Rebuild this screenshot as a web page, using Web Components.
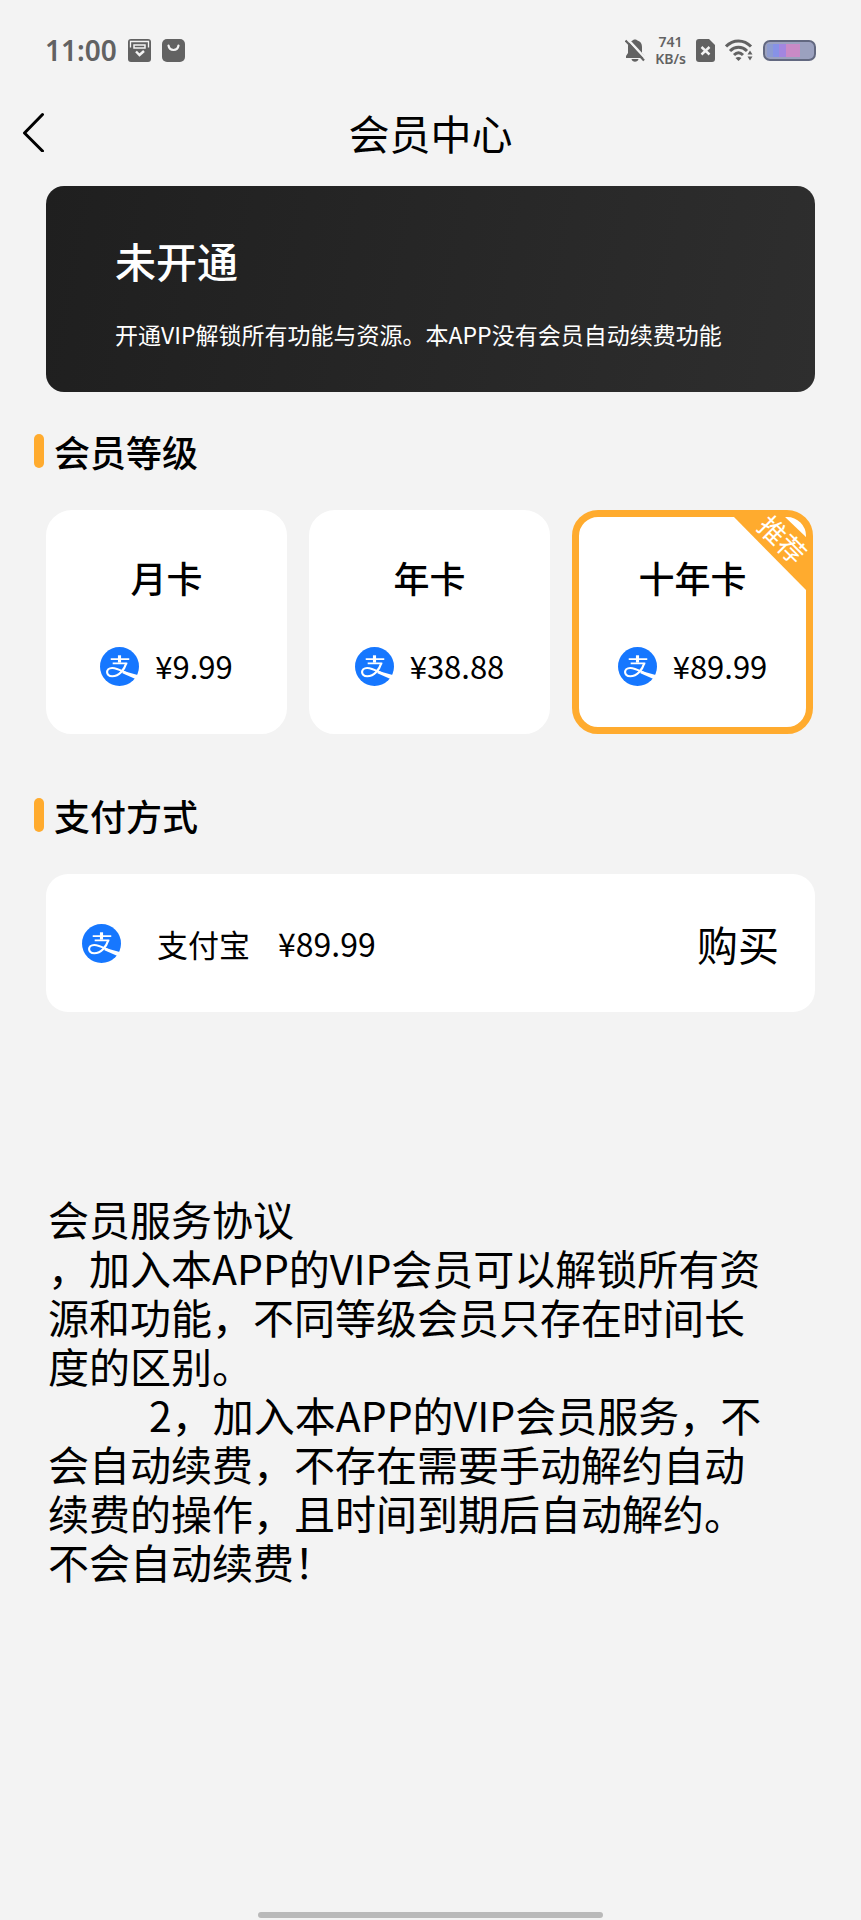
<!DOCTYPE html>
<html lang="zh-CN">
<head>
<meta charset="UTF-8">
<meta name="viewport" content="width=device-width, initial-scale=1">
<title>会员中心</title>
<style>
    body {
        margin: 0;
        background: #f3f3f3;
        color: #000;
        font-family: "Noto Sans CJK SC", sans-serif;
    }
</style>
</head>
<body>
<vip-page>
    <status-bar slot="top" time="11:00" speed="741"></status-bar>
    <nav-header slot="top">会员中心</nav-header>

    <vip-banner>
        <span slot="title">未开通</span>
        开通VIP解锁所有功能与资源。本APP没有会员自动续费功能
    </vip-banner>

    <section-title>会员等级</section-title>
    <plan-list></plan-list>

    <section-title class="pay">支付方式</section-title>
    <pay-row price="¥89.99">支付宝</pay-row>

    <service-terms></service-terms>
</vip-page>

<script>
class VipPage extends HTMLElement {
    constructor() {
        super();
        this.attachShadow({ mode: 'open' });
        this.shadowRoot.innerHTML = `
        <style>
            :host {
                display: flex;
                flex-direction: column;
                min-height: 100vh;
            }

            main {
                display: flex;
                flex-direction: column;
                padding: 22px 46px 0;
            }

            .home-bar {
                width: 40%;
                height: 6px;
                margin: auto auto 2px;
                border-radius: 3px;
                background: #b9b9b9;
            }

            ::slotted(section-title) {
                margin: 39px 0 39px -12px;
            }

            ::slotted(section-title.pay) {
                margin-top: 61px;
            }

            ::slotted(service-terms) {
                margin-top: 182px;
            }
        </style>
        <slot name="top"></slot>
        <main><slot></slot></main>
        <div class="home-bar"></div>
        `;
    }
}

class StatusBar extends HTMLElement {
    constructor() {
        super();
        this.attachShadow({ mode: 'open' });
        this.shadowRoot.innerHTML = `
        <style>
            :host {
                display: flex;
                justify-content: space-between;
                align-items: center;
                height: 100px;
                padding: 0 45px;
                color: #626262;
                font-family: "Noto Sans", sans-serif;
                font-weight: 600;
            }

            div {
                display: flex;
                align-items: center;
            }

            .left {
                gap: 11px;
            }

            .right {
                gap: 10px;
            }

            time {
                font-size: 28px;
                line-height: 32px;
            }

            .speed {
                flex-direction: column;
                font-size: 14px;
                line-height: 17px;
            }

            svg {
                display: block;
            }
        </style>
        <div class="left">
            <time>${this.getAttribute('time')}</time>
            <svg width="23" height="23" viewBox="0 0 23 23" aria-hidden="true">
                <rect width="23" height="23" rx="3" fill="#626262"/>
                <path d="M2.500 8.500V2.500h18v6" fill="none" stroke="#f3f3f3" stroke-width="1.300"/>
                <path d="M6 9V6h11v3z" fill="none" stroke="#f3f3f3" stroke-width="1.500"/>
                <path d="M8 12.500l3.500 3.500L16 12" fill="none" stroke="#f3f3f3" stroke-width="2.400"/>
            </svg>
            <svg width="23" height="23" viewBox="0 0 23 23" aria-hidden="true">
                <rect width="23" height="23" rx="5" fill="#626262"/>
                <path d="M6.500 6.500c1 6 9 6 10 0" fill="none" stroke="#f3f3f3" stroke-width="2.200" stroke-linecap="round"/>
            </svg>
        </div>
        <div class="right">
            <svg width="20" height="23" viewBox="0 0 20 23" aria-hidden="true">
                <path d="M1 19v-2l2-3V8c0-4 2-5.500 4.500-6.500 1-1.500 4-1.500 5 0C15.500 2.500 17 4.500 17 8v6l2.500 3v2zM6.500 20h7c-.5 3.500-6.500 3.500-7 0z" fill="#626262"/>
                <path d="M2 -.5l18.500 20" stroke="#f3f3f3" stroke-width="2.500"/>
                <path d="M.5 1.500l18.500 20" stroke="#626262" stroke-width="2.200"/>
            </svg>
            <div class="speed"><span>${this.getAttribute('speed')}</span><span>KB/s</span></div>
            <svg width="19" height="23" viewBox="0 0 19 23" aria-hidden="true">
                <path d="M3 0h10l6 6v14q0 3-3 3H3q-3 0-3-3V3q0-3 3-3z" fill="#626262"/>
                <path d="M5.500 8l8 7.500M13.500 8l-8 7.500" stroke="#f3f3f3" stroke-width="2.400"/>
            </svg>
            <svg width="28" height="22" viewBox="0 0 28 22" aria-hidden="true">
                <g fill="none" stroke="#626262" stroke-width="3">
                    <path d="M1 7.500c7-7.500 18-7.500 25 0"/>
                    <path d="M5 12c5-5 12-5 17 0"/>
                    <path d="M9 16c3-3 6-3 9 0"/>
                </g>
                <path d="M10.500 19q3-2 6 0l-3 3zM22.500 15.500L25 11.500l2.500 4zM22.500 17.500h5L25 21.500z" fill="#626262"/>
            </svg>
            <svg width="53" height="21" viewBox="0 0 53 21" aria-hidden="true">
                <rect x="1" y="1" width="51" height="19" rx="6" fill="#9ba1bf" stroke="#626880" stroke-width="2"/>
                <path d="M4 4h7v13H4z" fill="#8d9bd0"/>
                <path d="M10 4h6v13h-6z" fill="#8792e6"/>
                <path d="M16 4h7v13h-7z" fill="#a286e0"/>
                <path d="M23 4h14v13H23z" fill="#c98ac6"/>
            </svg>
        </div>
        `;
    }
}

class NavHeader extends HTMLElement {
    constructor() {
        super();
        this.attachShadow({ mode: 'open' });
        this.shadowRoot.innerHTML = `
        <style>
            :host {
                display: grid;
                grid-template-columns: 48px 1fr 48px;
                align-items: center;
                height: 64px;
                padding: 0 10px;
            }

            button {
                display: flex;
                padding: 12px;
                border: 0;
                background: none;
                cursor: pointer;
            }

            h1 {
                margin: 0;
                font-size: 41px;
                line-height: 49px;
                font-weight: 400;
                text-align: center;
            }
        </style>
        <button type="button" aria-label="返回">
            <svg width="24" height="40" viewBox="0 0 24 40" fill="none" stroke="#000" stroke-width="3" stroke-linecap="round" stroke-linejoin="round" aria-hidden="true">
                <path d="M20.500 2.500L2.500 21L20.500 39"/>
            </svg>
        </button>
        <h1><slot></slot></h1>
        `;
    }
}

class VipBanner extends HTMLElement {
    constructor() {
        super();
        this.attachShadow({ mode: 'open' });
        this.shadowRoot.innerHTML = `
        <style>
            :host {
                display: flex;
                flex-direction: column;
                gap: 32px;
                padding: 50px 69px 41px;
                border-radius: 18px;
                background: linear-gradient(100deg, #1f1f1f, #2e2e2e);
                color: #fff;
            }

            h2, p {
                margin: 0;
            }

            h2 {
                font-size: 41px;
                line-height: 49px;
                font-weight: 500;
            }

            p {
                font-size: 23px;
                line-height: 34px;
            }
        </style>
        <h2><slot name="title"></slot></h2>
        <p><slot></slot></p>
        `;
    }
}

class SectionTitle extends HTMLElement {
    constructor() {
        super();
        this.attachShadow({ mode: 'open' });
        this.shadowRoot.innerHTML = `
        <style>
            :host {
                display: flex;
                align-items: center;
                gap: 10px;
                height: 40px;
            }

            i {
                width: 10px;
                height: 34px;
                border-radius: 5px;
                background: #ffab2e;
            }

            h2 {
                margin: 0;
                font-size: 36px;
                line-height: 40px;
                font-weight: 500;
            }
        </style>
        <i></i>
        <h2><slot></slot></h2>
        `;
    }
}

class AlipayIcon extends HTMLElement {
    constructor() {
        super();
        this.attachShadow({ mode: 'open' });
        this.shadowRoot.innerHTML = `
        <style>
            :host {
                display: block;
                flex: none;
            }

            svg {
                display: block;
            }
        </style>
        <svg width="39" height="39" viewBox="0 0 40 40" aria-hidden="true">
            <circle cx="20" cy="20" r="20" fill="#1677ff"/>
            <g fill="none" stroke="#fff">
                <path d="M20 8.500V16" stroke-width="3.200"/>
                <path d="M11 12.500H30M13 16.800H28" stroke-width="1.800"/>
                <path d="M27 16.500C25 23 20 30 12.500 30C5.500 30 5.500 21.500 12.500 21.500C18 21.500 23 25 28 27.200" stroke-width="2.200"/>
            </g>
            <path d="M24 24.500L39.500 29L37 33L23 26.800z" fill="#fff"/>
        </svg>
        `;
    }
}

class PlanCard extends HTMLElement {
    constructor() {
        super();
        this.attachShadow({ mode: 'open' });
    }

    connectedCallback() {
        const selected = this.hasAttribute('selected');
        this.shadowRoot.innerHTML = `
        <style>
            :host {
                display: block;
            }

            label {
                position: relative;
                display: flex;
                flex-direction: column;
                align-items: center;
                gap: 45px;
                box-sizing: border-box;
                height: 224px;
                padding-top: 38px;
                border: 7px solid #fff;
                border-radius: 26px;
                background: #fff;
                cursor: pointer;
            }

            label:has(input:checked) {
                border-color: #ffab2e;
            }

            input {
                position: absolute;
                opacity: 0;
            }

            .name {
                font-size: 36px;
                line-height: 44px;
                font-weight: 500;
            }

            .price {
                display: flex;
                align-items: center;
                gap: 16px;
                font-size: 31px;
                line-height: 44px;
            }

            .ribbon {
                position: absolute;
                top: 0;
                right: 0;
                overflow: visible;
            }
        </style>
        <label>
            <input type="radio" name="plan" ${selected ? 'checked' : ''}>
            <span class="name"><slot></slot></span>
            <span class="price"><alipay-icon></alipay-icon>${this.getAttribute('price')}</span>
            ${this.hasAttribute('badge') ? `
            <svg class="ribbon" width="84" height="84" viewBox="0 0 84 84">
                <path d="M11 -1H62L85 21V74z" fill="#ffab2e"/>
                <text x="60" y="33" transform="rotate(45 60 23)" text-anchor="middle" font-size="27" fill="#fff">${this.getAttribute('badge')}</text>
            </svg>` : ''}
        </label>
        `;
    }
}

class PlanList extends HTMLElement {
    constructor() {
        super();
        this.attachShadow({ mode: 'open' });
        this.shadowRoot.innerHTML = `
        <style>
            :host {
                display: grid;
                grid-template-columns: repeat(3, 1fr);
                gap: 22px;
                padding-right: 2px;
            }
        </style>
        <plan-card price="¥9.99">月卡</plan-card>
        <plan-card price="¥38.88">年卡</plan-card>
        <plan-card price="¥89.99" badge="推荐" selected>十年卡</plan-card>
        `;
    }
}

class PayRow extends HTMLElement {
    constructor() {
        super();
        this.attachShadow({ mode: 'open' });
        this.shadowRoot.innerHTML = `
        <style>
            :host {
                display: flex;
                align-items: center;
                height: 138px;
                padding: 0 36px;
                border-radius: 22px;
                background: #fff;
                font-size: 31px;
            }

            .name {
                margin: 0 28px 0 36px;
            }

            .price {
                font-size: 32px;
            }

            button {
                margin-left: auto;
                padding: 0;
                border: 0;
                background: none;
                color: inherit;
                font: inherit;
                font-size: 41px;
                cursor: pointer;
            }
        </style>
        <alipay-icon></alipay-icon>
        <span class="name"><slot></slot></span>
        <span class="price">${this.getAttribute('price')}</span>
        <button type="button">购买</button>
        `;
    }
}

class ServiceTerms extends HTMLElement {
    constructor() {
        super();
        this.attachShadow({ mode: 'open' });
        this.shadowRoot.innerHTML = `
        <style>
            :host {
                display: block;
                padding: 0 40px 0 2px;
                font-size: 41px;
                line-height: 49px;
            }

            p {
                margin: 0;
                white-space: pre-wrap;
                text-spacing-trim: space-all;
            }
        </style>
        <p>会员服务协议
，加入本APP的VIP会员可以解锁所有资源和功能，不同等级会员只存在时间长度的区别。
           2，加入本APP的VIP会员服务，不会自动续费，不存在需要手动解约自动续费的操作，且时间到期后自动解约。不会自动续费！</p>
        `;
    }
}

// Register the custom elements
customElements.define('alipay-icon', AlipayIcon);
customElements.define('vip-page', VipPage);
customElements.define('status-bar', StatusBar);
customElements.define('nav-header', NavHeader);
customElements.define('vip-banner', VipBanner);
customElements.define('section-title', SectionTitle);
customElements.define('plan-card', PlanCard);
customElements.define('plan-list', PlanList);
customElements.define('pay-row', PayRow);
customElements.define('service-terms', ServiceTerms);
</script>
</body>
</html>
